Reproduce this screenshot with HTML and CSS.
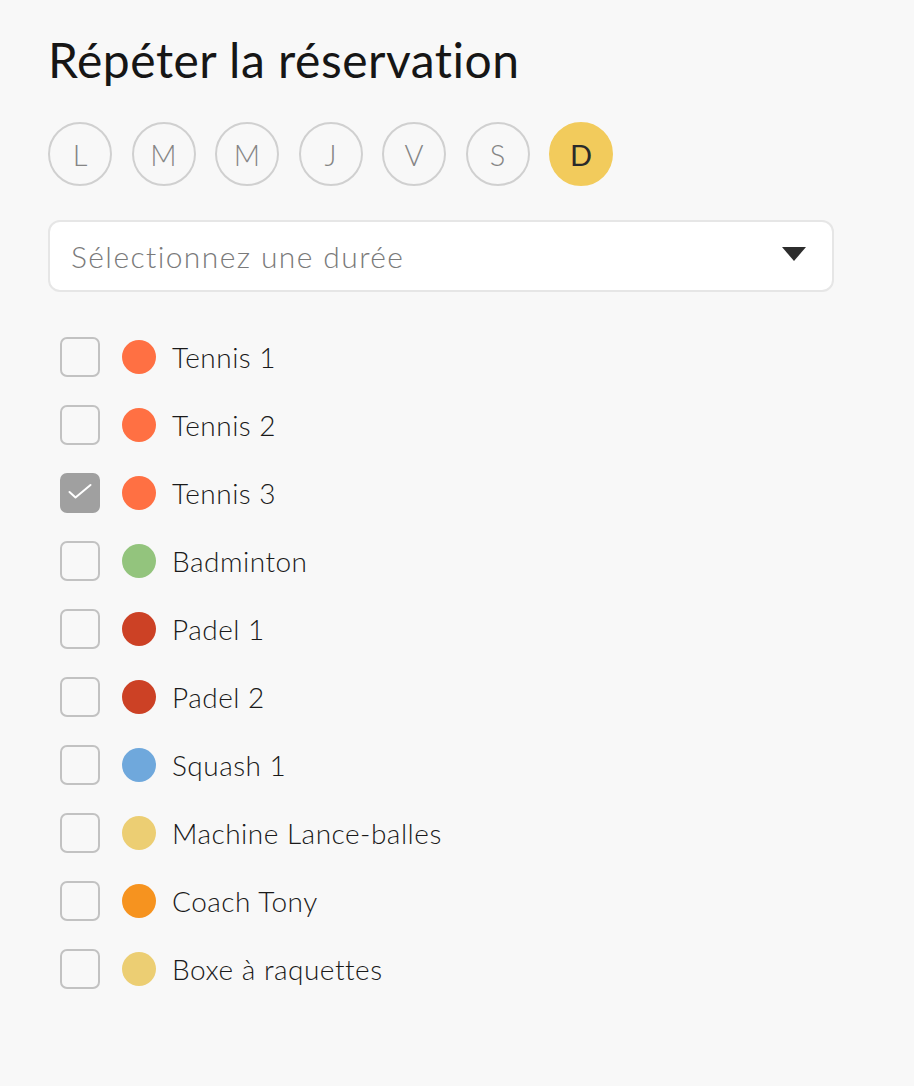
FILE: index.html
```html
<!DOCTYPE html>
<html lang="fr">

<head>
    <meta charset="UTF-8">
    <meta name="viewport" content="width=device-width, initial-scale=1.0">
    <title>Répéter la réservation</title>
    <link rel="stylesheet" href="styles.css">
</head>

<body>
    <div class="panel">
        <h1 class="title">Répéter la réservation</h1>

        <div class="days">
            <div class="day">L</div>
            <div class="day">M</div>
            <div class="day">M</div>
            <div class="day">J</div>
            <div class="day">V</div>
            <div class="day">S</div>
            <div class="day active">D</div>
        </div>

        <div class="select">
            <span class="placeholder">Sélectionnez une durée</span>
            <span class="caret"></span>
        </div>

        <div class="resources">
            <div class="resource">
                <span class="check"></span>
                <span class="dot tennis"></span>
                <span class="label">Tennis 1</span>
            </div>
            <div class="resource">
                <span class="check"></span>
                <span class="dot tennis"></span>
                <span class="label">Tennis 2</span>
            </div>
            <div class="resource">
                <span class="check checked">
                    <svg width="36" height="36" viewBox="0 0 36 36">
                        <path d="M7.5 17 L13.5 22.5 L28.5 10" fill="none" stroke="#fff" stroke-width="2" stroke-linecap="round" stroke-linejoin="round" />
                    </svg>
                </span>
                <span class="dot tennis"></span>
                <span class="label">Tennis 3</span>
            </div>
            <div class="resource">
                <span class="check"></span>
                <span class="dot badminton"></span>
                <span class="label">Badminton</span>
            </div>
            <div class="resource">
                <span class="check"></span>
                <span class="dot padel"></span>
                <span class="label">Padel 1</span>
            </div>
            <div class="resource">
                <span class="check"></span>
                <span class="dot padel"></span>
                <span class="label">Padel 2</span>
            </div>
            <div class="resource">
                <span class="check"></span>
                <span class="dot squash"></span>
                <span class="label">Squash 1</span>
            </div>
            <div class="resource">
                <span class="check"></span>
                <span class="dot sand"></span>
                <span class="label">Machine Lance-balles</span>
            </div>
            <div class="resource">
                <span class="check"></span>
                <span class="dot coach"></span>
                <span class="label">Coach Tony</span>
            </div>
            <div class="resource">
                <span class="check"></span>
                <span class="dot sand"></span>
                <span class="label">Boxe à raquettes</span>
            </div>
        </div>
    </div>
</body>

</html>
```

FILE: styles.css
```css
* {
    box-sizing: border-box;
}

body {
    margin: 0;
    background: #f8f8f8;
    font-family: Lato, "Noto Sans", sans-serif;
    color: #1c1c1c;
}

.panel {
    padding: 32px 48px 40px;
}

.title {
    margin: 0;
    font-size: 48px;
    font-weight: 400;
    letter-spacing: 0.5px;
    line-height: 56px;
    color: #161616;
}

.days {
    display: flex;
    gap: 19.5px;
    margin-top: 34px;
}

.day {
    width: 64px;
    height: 64px;
    border: 2px solid #d0d0d0;
    border-radius: 50%;
    display: flex;
    align-items: center;
    justify-content: center;
    font-size: 29px;
    font-weight: 300;
    color: #858585;
}

.day.active {
    background: #f2cb5c;
    border-color: #f2cb5c;
    color: #2a2a2a;
    font-weight: 400;
}

.select {
    width: 786px;
    height: 72px;
    margin-top: 34px;
    background: #fff;
    border: 2px solid #e6e6e6;
    border-radius: 12px;
    display: flex;
    align-items: center;
    justify-content: space-between;
    padding: 0 26px 0 21px;
}

.placeholder {
    font-size: 30px;
    font-weight: 300;
    letter-spacing: 1.4px;
    color: #7a7a7a;
}

.caret {
    width: 0;
    height: 0;
    border-left: 12px solid transparent;
    border-right: 12px solid transparent;
    border-top: 14px solid #2d2d2d;
    margin-top: -4px;
}

.resources {
    margin-top: 45px;
    padding-left: 12px;
    display: flex;
    flex-direction: column;
    gap: 28px;
}

.resource {
    display: flex;
    align-items: center;
    height: 40px;
}

.check {
    width: 40px;
    height: 40px;
    border: 2px solid #c2c2c2;
    border-radius: 7px;
    display: flex;
    align-items: center;
    justify-content: center;
}

.check.checked {
    background: #a0a0a0;
    border-color: #a0a0a0;
}

.dot {
    width: 34px;
    height: 34px;
    border-radius: 50%;
    margin-left: 22px;
}

.tennis {
    background: #ff7043;
}

.badminton {
    background: #93c47d;
}

.padel {
    background: #cc4125;
}

.squash {
    background: #6fa8dc;
}

.sand {
    background: #ecce73;
}

.coach {
    background: #f6931f;
}

.label {
    margin-left: 16px;
    font-size: 28px;
    font-weight: 300;
    letter-spacing: 0.5px;
    color: #1a1a1a;
}
```
